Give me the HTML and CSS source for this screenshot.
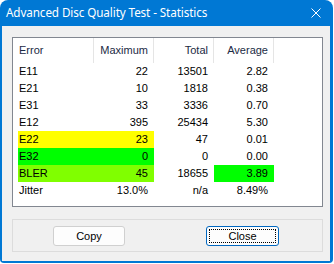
FILE: index.html
```html
<!DOCTYPE html>
<html>
<head>
<meta charset="utf-8">
<link rel="stylesheet" href="styles.css">
</head>
<body>
<div class="window">
  <div class="titlebar">
    <span class="title">Advanced Disc Quality Test - Statistics</span>
    <svg class="close-x" width="10" height="10" viewBox="0 0 10 10"><path d="M0.5 0.5 L9.5 9.5 M9.5 0.5 L0.5 9.5" stroke="#fff" stroke-width="1" fill="none"/></svg>
  </div>
  <div class="client">
    <div class="list">
      <div class="row header">
        <div class="cell first">Error</div>
        <div class="cell num">Maximum</div>
        <div class="cell num">Total</div>
        <div class="cell num">Average</div>
      </div>
      <div class="row"><div class="cell first">E11</div><div class="cell num">22</div><div class="cell num">13501</div><div class="cell num">2.82</div></div>
      <div class="row"><div class="cell first">E21</div><div class="cell num">10</div><div class="cell num">1818</div><div class="cell num">0.38</div></div>
      <div class="row"><div class="cell first">E31</div><div class="cell num">33</div><div class="cell num">3336</div><div class="cell num">0.70</div></div>
      <div class="row"><div class="cell first">E12</div><div class="cell num">395</div><div class="cell num">25434</div><div class="cell num">5.30</div></div>
      <div class="row"><div class="cell first yellow">E22</div><div class="cell num yellow">23</div><div class="cell num">47</div><div class="cell num">0.01</div></div>
      <div class="row"><div class="cell first green">E32</div><div class="cell num green">0</div><div class="cell num">0</div><div class="cell num">0.00</div></div>
      <div class="row"><div class="cell first lime">BLER</div><div class="cell num lime">45</div><div class="cell num">18655</div><div class="cell num green">3.89</div></div>
      <div class="row"><div class="cell first">Jitter</div><div class="cell num">13.0%</div><div class="cell num">n/a</div><div class="cell num">8.49%</div></div>
    </div>
    <div class="group">
      <button class="btn copy">Copy</button>
      <button class="btn close focused">Close</button>
    </div>
  </div>
</div>
</body>
</html>
```
FILE: styles.css
```css
html, body {
  margin: 0;
  padding: 0;
  background: #ffffff;
}
body {
  font-family: "Liberation Sans", Arial, sans-serif;
  font-size: 11px;
  color: #000;
}
.window {
  width: 333px;
  height: 263px;
  background: #0078d4;
  border-radius: 8px 8px 4px 4px;
  display: flex;
  flex-direction: column;
  box-sizing: border-box;
  padding: 0 3px 2px 2px;
}
.titlebar {
  height: 26px;
  flex: none;
  display: flex;
  align-items: center;
  justify-content: space-between;
  padding: 0 9px 0 4px;
  color: #fff;
}
.title {
  font-family: "Noto Sans", "Liberation Sans", sans-serif;
  font-size: 11.7px;
  letter-spacing: -0.1px;
  position: relative;
  top: -1px;
}
.close-x {
  display: block;
}
.client {
  flex: 1;
  background: #f0f0f0;
  padding: 11px 0 0 10px;
}
.list {
  width: 311px;
  height: 170px;
  box-sizing: border-box;
  border: 1px solid #828790;
  background: #fff;
}
.row {
  display: grid;
  grid-template-columns: 81px 60px 60px 60px;
  height: 17px;
  line-height: 17px;
}
.row.header {
  height: 25px;
  line-height: 24px;
  color: #1b2a44;
}
.cell {
  box-sizing: border-box;
  white-space: nowrap;
}
.cell.first {
  margin-left: 5px;
  padding-left: 1px;
}
.cell.num {
  text-align: right;
  padding-right: 6px;
}
.header .cell {
  border-right: 1px solid #e5e5e5;
  height: 25px;
}
.header .cell.num {
  padding-right: 5px;
}
.yellow { background: #ffff00; }
.green { background: #00ff00; }
.lime { background: #80ff00; }
.group {
  width: 311px;
  height: 33px;
  box-sizing: border-box;
  margin-top: 12px;
  border: 1px solid #dcdcdc;
  display: flex;
  align-items: flex-start;
  padding: 6px 0 0 40px;
  gap: 81px;
}
.btn {
  font-family: inherit;
  font-size: 11px;
  width: 72px;
  height: 20px;
  margin: 0;
  padding: 0;
  background: #fdfdfd;
  border: 1px solid #d0d0d0;
  border-radius: 3px;
  color: #000;
  line-height: 16px;
  position: relative;
}
.btn.close {
  width: 73px;
  border: 1px solid #0067c0;
}
.btn.close::after {
  content: "";
  position: absolute;
  inset: 2px;
  border: 1px dotted #000;
}
```
